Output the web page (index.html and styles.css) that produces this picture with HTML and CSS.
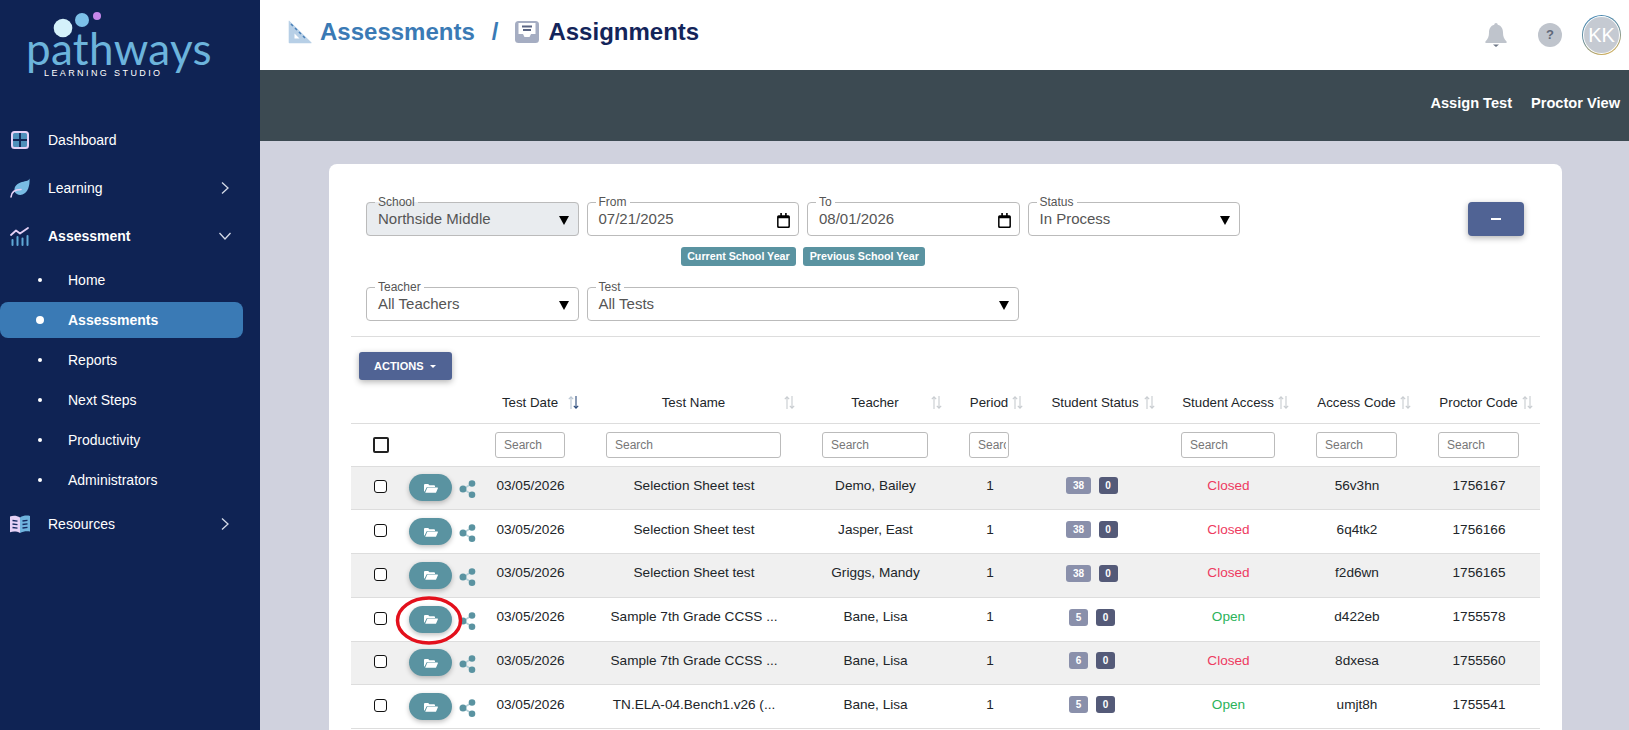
FILE: index.html
```html
<!DOCTYPE html>
<html lang="en">
<head>
<meta charset="utf-8">
<title>Assignments</title>
<link rel="stylesheet" href="styles.css">
</head>
<body>
<svg class="defs" width="0" height="0" aria-hidden="true">
  <symbol id="folder" viewBox="0 0 14 10"><path d="M0 2a1 1 0 0 1 1-1h3.200l1.200 1.200H10a1 1 0 0 1 1 1V4H3.400a1 1 0 0 0-.9.6L.6 8.600H.5a.5.5 0 0 1-.5-.5z"/><path d="M3.400 4.600h10a.5.5 0 0 1 .5.7l-1.700 3.900a1 1 0 0 1-.9.6H1.200z"/></symbol>
  <symbol id="share" viewBox="0 0 18 20"><path d="M14 4.500 5 10l9 5.500" fill="none" stroke="#b5d0d8" stroke-width="1.500"/><circle cx="5" cy="10" r="3.500" fill="#5a93a1"/><circle cx="14" cy="4.500" r="3.300" fill="#5a93a1"/><circle cx="14" cy="15.800" r="3.300" fill="#5a93a1"/></symbol>
  <symbol id="sort" viewBox="0 0 11 13"><path class="s-up" d="M3 13V1M.8 3.200 3 .8l2.200 2.400" fill="none"/><path class="s-down" d="M8 0v12M5.800 9.800 8 12.200l2.200-2.400" fill="none"/></symbol>
  <symbol id="cal" viewBox="0 0 12 14"><path d="M3 0h1.500v2h3V0H9v2h1.500A1.500 1.500 0 0 1 12 3.500v9a1.500 1.500 0 0 1-1.500 1.500h-9A1.500 1.500 0 0 1 0 12.500v-9A1.500 1.500 0 0 1 1.500 2H3zM1.400 5v7.200c0 .2.200.4.400.4h8.400c.2 0 .4-.2.400-.4V5z"/></symbol>
</svg>

<aside class="sidebar">
  <div class="logo">
    <svg class="logo-dots" width="90" height="40" viewBox="0 0 90 40"><circle cx="18" cy="25" r="9.300" fill="#d4f1fa"/><circle cx="37" cy="17" r="7" fill="#7cc0e8"/><circle cx="52" cy="13" r="4" fill="#c687ea"/></svg>
    <div class="logo-name">pathways</div>
    <div class="logo-sub">LEARNING STUDIO</div>
  </div>
  <nav class="nav">
    <a class="nav-item">
      <svg class="nav-icon" viewBox="0 0 20 20"><path d="M3 3h14v14H3z" fill="#4f8fbb"/><path d="M3 10h14M10 3v14" stroke="#0f2354" stroke-width="1.800"/><rect x="2" y="2" width="16" height="16" rx="2.500" fill="none" stroke="#e6d1f6" stroke-width="2"/></svg>
      <span>Dashboard</span>
    </a>
    <a class="nav-item">
      <svg class="nav-icon" viewBox="0 0 20 20"><path d="M19.500 .5c-1 3-5 2.500-9 4C6 6.200 4 9 4.500 13.500c1.500 3 5 4 8 3 5.500-2 7.500-9 7-16z" fill="#79bce4"/><path d="M1 19c.3-4.500 3.500-7.500 10-7.500" fill="none" stroke="#e6d1f6" stroke-width="1.600" stroke-linecap="round"/></svg>
      <span>Learning</span>
      <svg class="chev" viewBox="0 0 10 14"><path d="M2 1.500 8 7l-6 5.500"/></svg>
    </a>
    <a class="nav-item is-open">
      <svg class="nav-icon" viewBox="0 0 20 20"><path d="M1 9l5-4.500 4 3 8-5.500" fill="none" stroke="#e6d1f6" stroke-width="1.800" stroke-linecap="round" stroke-linejoin="round"/><path d="M2.500 14v5M7.500 11v8M12.500 12.500v6.500M17.500 10v9" stroke="#5fa8d6" stroke-width="2" stroke-linecap="round"/></svg>
      <span>Assessment</span>
      <svg class="chev chev-down" viewBox="0 0 14 10"><path d="M1.500 2 7 8l5.500-6"/></svg>
    </a>
    <a class="sub-item"><i class="dot"></i><span>Home</span></a>
    <a class="sub-item is-active"><i class="dot"></i><span>Assessments</span></a>
    <a class="sub-item"><i class="dot"></i><span>Reports</span></a>
    <a class="sub-item"><i class="dot"></i><span>Next Steps</span></a>
    <a class="sub-item"><i class="dot"></i><span>Productivity</span></a>
    <a class="sub-item"><i class="dot"></i><span>Administrators</span></a>
    <a class="nav-item">
      <svg class="nav-icon" viewBox="0 0 20 20"><path d="M0 2.500C3 1.500 7 1.500 10 3.500V19c-3-1.800-7-1.800-10-.8z" fill="#e6d1f6"/><path d="M20 2c-3-.8-7-.5-10 1.500V19c3-1.800 7-2.200 10-1.500z" fill="#6fb3de"/><path d="M2.500 6.500l5 .7M2.500 10l5 .7M2.500 13.500l5 .7M12.500 7l5-.7M12.500 10.500l5-.7M12.500 14l5-.7" stroke="#14295f" stroke-width="1.300"/></svg>
      <span>Resources</span>
      <svg class="chev" viewBox="0 0 10 14"><path d="M2 1.500 8 7l-6 5.500"/></svg>
    </a>
  </nav>
</aside>

<main class="main">
  <header class="topbar">
    <div class="crumbs">
      <svg class="crumb-icon" viewBox="0 0 24 24"><path d="M1 .5 23.500 22.500a.5.5 0 0 1-.4.8H1.500a.8.8 0 0 1-.8-.8V1z" fill="#b7cfe6"/><path d="M6.500 13.500l5 5h-5z" fill="#fff"/><path d="M3 4l2 2M7 8l2 2M11 12l2 2M15 16l2 2" stroke="#4a80b8" stroke-width="1.500"/></svg>
      <span class="crumb-link">Assessments</span>
      <span class="crumb-sep">/</span>
      <svg class="crumb-icon" viewBox="0 0 24 24"><rect y="1" width="24" height="22" rx="3.500" fill="#a5adc2"/><path d="M3.500 3h17v11h-4.500l-1.500 3h-5l-1.500-3H3.500z" fill="#fff"/><path d="M7 6.500h10M8 10h8" stroke="#5a6583" stroke-width="1.800"/></svg>
      <span class="crumb-current">Assignments</span>
    </div>
    <div class="top-tools">
      <svg class="bell" viewBox="0 0 22 24"><path d="M11 0c1 0 1.700.8 1.700 1.800C16.500 2.700 18 6 18 9.500c0 4 1 6.500 3.500 9 .6.700.2 1.500-.7 1.500H1.200c-.9 0-1.300-.8-.7-1.500C3 16 4 13.500 4 9.500 4 6 5.500 2.700 9.300 1.800 9.300.8 10 0 11 0z" fill="#bfc4cc"/><path d="M8 21.500h6L11 24z" fill="#6d7686"/></svg>
      <div class="help">?</div>
      <div class="avatar"><div class="avatar-in">KK</div></div>
    </div>
  </header>
  <div class="actionbar">
    <a>Assign Test</a>
    <a>Proctor View</a>
  </div>

  <div class="content">
    <section class="card">
      <div class="filters-wrap">
        <div class="filters">
          <fieldset class="field is-disabled"><legend>School</legend><span>Northside Middle</span><i class="caret"></i></fieldset>
          <fieldset class="field"><legend>From</legend><span>07/21/2025</span><svg class="cal"><use href="#cal"/></svg></fieldset>
          <fieldset class="field"><legend>To</legend><span>08/01/2026</span><svg class="cal"><use href="#cal"/></svg></fieldset>
          <fieldset class="field"><legend>Status</legend><span>In Process</span><i class="caret"></i></fieldset>
          <div class="chips"><span class="chip">Current School Year</span><span class="chip">Previous School Year</span></div>
          <fieldset class="field row-start"><legend>Teacher</legend><span>All Teachers</span><i class="caret"></i></fieldset>
          <fieldset class="field span-2"><legend>Test</legend><span>All Tests</span><i class="caret"></i></fieldset>
        </div>
        <button class="btn-min"><i></i></button>
      </div>
      <div class="table-wrap">
        <div class="toolbar"><button class="btn-actions">ACTIONS<i></i></button></div>
        <table class="grid">
          <colgroup>
            <col class="w-check"><col class="w-act"><col class="w-date"><col class="w-name"><col class="w-teacher"><col class="w-period"><col class="w-status"><col class="w-access"><col class="w-code"><col class="w-proctor">
          </colgroup>
          <thead>
            <tr class="head">
              <th></th><th></th>
              <th><div class="hd">Test Date<svg class="sort is-sorted"><use href="#sort"/></svg></div></th>
              <th><div class="hd">Test Name<svg class="sort"><use href="#sort"/></svg></div></th>
              <th><div class="hd">Teacher<svg class="sort"><use href="#sort"/></svg></div></th>
              <th class="c-period"><div class="hd">Period<svg class="sort"><use href="#sort"/></svg></div></th>
              <th class="c-status"><div class="hd">Student Status<svg class="sort"><use href="#sort"/></svg></div></th>
              <th><div class="hd">Student Access<svg class="sort"><use href="#sort"/></svg></div></th>
              <th><div class="hd">Access Code<svg class="sort"><use href="#sort"/></svg></div></th>
              <th class="c-proctor"><div class="hd">Proctor Code<svg class="sort"><use href="#sort"/></svg></div></th>
            </tr>
            <tr class="search">
              <th class="c-check"><input class="check-all" type="checkbox"></th><th></th>
              <th><input placeholder="Search"></th>
              <th><input placeholder="Search"></th>
              <th><input placeholder="Search"></th>
              <th class="c-period"><input placeholder="Search"></th>
              <th></th>
              <th><input placeholder="Search"></th>
              <th><input placeholder="Search"></th>
              <th class="c-proctor"><input placeholder="Search"></th>
            </tr>
          </thead>
          <tbody>
            <tr>
              <td class="c-check"><input type="checkbox"></td>
              <td class="c-act"><div class="act"><button class="btn-open"><svg><use href="#folder"/></svg></button><svg class="share"><use href="#share"/></svg></div></td>
              <td>03/05/2026</td><td>Selection Sheet test</td><td>Demo, Bailey</td><td class="c-period">1</td>
              <td class="c-status"><span class="badge b-a">38</span><span class="badge b-b">0</span></td>
              <td class="closed">Closed</td><td>56v3hn</td><td class="c-proctor">1756167</td>
            </tr>
            <tr>
              <td class="c-check"><input type="checkbox"></td>
              <td class="c-act"><div class="act"><button class="btn-open"><svg><use href="#folder"/></svg></button><svg class="share"><use href="#share"/></svg></div></td>
              <td>03/05/2026</td><td>Selection Sheet test</td><td>Jasper, East</td><td class="c-period">1</td>
              <td class="c-status"><span class="badge b-a">38</span><span class="badge b-b">0</span></td>
              <td class="closed">Closed</td><td>6q4tk2</td><td class="c-proctor">1756166</td>
            </tr>
            <tr>
              <td class="c-check"><input type="checkbox"></td>
              <td class="c-act"><div class="act"><button class="btn-open"><svg><use href="#folder"/></svg></button><svg class="share"><use href="#share"/></svg></div></td>
              <td>03/05/2026</td><td>Selection Sheet test</td><td>Griggs, Mandy</td><td class="c-period">1</td>
              <td class="c-status"><span class="badge b-a">38</span><span class="badge b-b">0</span></td>
              <td class="closed">Closed</td><td>f2d6wn</td><td class="c-proctor">1756165</td>
            </tr>
            <tr>
              <td class="c-check"><input type="checkbox"></td>
              <td class="c-act"><div class="act"><button class="btn-open"><svg><use href="#folder"/></svg></button><svg class="share"><use href="#share"/></svg><svg class="ring" viewBox="0 0 68 49"><ellipse cx="34" cy="24.500" rx="31.500" ry="22.500"/></svg></div></td>
              <td>03/05/2026</td><td>Sample 7th Grade CCSS ...</td><td>Bane, Lisa</td><td class="c-period">1</td>
              <td class="c-status"><span class="badge b-a">5</span><span class="badge b-b">0</span></td>
              <td class="open">Open</td><td>d422eb</td><td class="c-proctor">1755578</td>
            </tr>
            <tr>
              <td class="c-check"><input type="checkbox"></td>
              <td class="c-act"><div class="act"><button class="btn-open"><svg><use href="#folder"/></svg></button><svg class="share"><use href="#share"/></svg></div></td>
              <td>03/05/2026</td><td>Sample 7th Grade CCSS ...</td><td>Bane, Lisa</td><td class="c-period">1</td>
              <td class="c-status"><span class="badge b-a">6</span><span class="badge b-b">0</span></td>
              <td class="closed">Closed</td><td>8dxesa</td><td class="c-proctor">1755560</td>
            </tr>
            <tr>
              <td class="c-check"><input type="checkbox"></td>
              <td class="c-act"><div class="act"><button class="btn-open"><svg><use href="#folder"/></svg></button><svg class="share"><use href="#share"/></svg></div></td>
              <td>03/05/2026</td><td>TN.ELA-04.Bench1.v26 (...</td><td>Bane, Lisa</td><td class="c-period">1</td>
              <td class="c-status"><span class="badge b-a">5</span><span class="badge b-b">0</span></td>
              <td class="open">Open</td><td>umjt8h</td><td class="c-proctor">1755541</td>
            </tr>
          </tbody>
        </table>
      </div>
    </section>
  </div>
</main>
</body>
</html>
```
FILE: styles.css
```css
* { box-sizing: border-box; }
html, body { height: 100%; }
body {
  margin: 0;
  display: flex;
  height: 100vh;
  overflow: hidden;
  font-family: "Liberation Sans", Arial, sans-serif;
  font-size: 14px;
  color: #212529;
  background: #d0d2de;
}
.defs { position: absolute; }

/* sidebar */
.sidebar {
  width: 260px;
  flex: none;
  background: #0f2354;
  color: #fff;
}
.logo {
  position: relative;
  height: 116px;
  padding: 30px 0 0 26px;
}
.logo-dots { position: absolute; left: 45px; top: 3px; }
.logo-name {
  font-family: Lato, "Open Sans", sans-serif;
  font-weight: 400;
  font-size: 44px;
  line-height: 36px;
  letter-spacing: 0.3px;
  color: #6cb4dc;
}
.logo-sub {
  position: absolute;
  left: 44px;
  top: 68px;
  font-size: 9px;
  line-height: 10px;
  letter-spacing: 2.400px;
  color: #fff;
}
.nav { display: flex; flex-direction: column; }
.nav-item {
  display: flex;
  align-items: center;
  height: 48px;
  padding-left: 10px;
  color: #fff;
}
.nav-icon { width: 20px; height: 20px; margin-right: 18px; flex: none; }
.is-open { font-weight: 700; }
.chev {
  width: 10px;
  height: 14px;
  margin-left: auto;
  margin-right: 30px;
  fill: none;
  stroke: #d5dbe8;
  stroke-width: 1.300;
}
.chev-down { width: 14px; height: 10px; margin-right: 28px; }
.sub-item {
  display: flex;
  align-items: center;
  height: 36px;
  margin: 2px 17px 2px 0;
  border-radius: 8px;
  color: #fff;
}
.dot {
  width: 4px;
  height: 4px;
  margin: 0 26px 0 38px;
  border-radius: 50%;
  background: #fff;
  flex: none;
}
.is-active { background: #3a7ab5; font-weight: 700; }
.is-active .dot { width: 8px; height: 8px; margin: 0 24px 0 36px; }

/* main */
.main { flex: 1; min-width: 0; display: flex; flex-direction: column; }
.topbar {
  height: 70px;
  flex: none;
  background: #fff;
  display: flex;
  align-items: center;
  justify-content: space-between;
  padding: 0 8px 0 28px;
}
.crumbs { display: flex; align-items: center; font-weight: 700; font-size: 24px; padding-bottom: 6px; }
.crumb-icon { width: 24px; height: 24px; }
.crumb-link { color: #3a7ab5; margin-left: 8px; }
.crumb-sep { color: #3a7ab5; margin: 0 17px 0 17px; }
.crumb-current { color: #13245a; margin-left: 9px; }
.top-tools { display: flex; align-items: center; }
.bell { width: 22px; height: 24px; margin-right: 31px; }
.help {
  width: 24px;
  height: 24px;
  margin-right: 20px;
  border-radius: 50%;
  background: #bfc4cc;
  color: #5f6878;
  font-weight: 700;
  font-size: 13px;
  line-height: 24px;
  text-align: center;
}
.avatar {
  width: 39px;
  height: 40px;
  padding: 1px;
  border-radius: 50%;
  background: linear-gradient(160deg, #3f86b8 0%, #6b8f9a 50%, #e8b64c 100%);
}
.avatar-in {
  width: 100%;
  height: 100%;
  border-radius: 50%;
  border: 1px solid #fff;
  background: #c5cad2;
  color: #fff;
  font-size: 20px;
  line-height: 36px;
  text-align: center;
}
.actionbar {
  height: 71px;
  flex: none;
  background: #3c4a52;
  color: #fff;
  font-weight: 700;
  font-size: 14.600px;
  display: flex;
  justify-content: flex-end;
  gap: 19px;
  padding: 25px 9px 0 0;
  line-height: 16px;
}
.content { flex: 1; min-height: 0; padding: 23px 67px 0 69px; overflow: hidden; }
.card {
  background: #fff;
  border-radius: 8px;
  height: 700px;
}

/* filters */
.filters-wrap {
  display: flex;
  justify-content: space-between;
  align-items: flex-start;
  padding: 31px 38px 0 37px;
}
.filters {
  display: grid;
  grid-template-columns: repeat(4, 212.500px);
  column-gap: 8px;
}
.field {
  display: flex;
  align-items: center;
  justify-content: space-between;
  margin: 0;
  height: 41px;
  min-width: 0;
  padding: 0 8px 0 11px;
  border: 1px solid #bbb;
  border-radius: 4px;
  font-size: 15px;
  color: #555;
}
.field legend {
  padding: 0 3px;
  margin-left: -3px;
  font-size: 12px;
  line-height: 14px;
  color: #555;
}
.field span { position: relative; top: -4px; }
.is-disabled { background: #e9ecef; }
.row-start { grid-column-start: 1; }
.span-2 { grid-column: span 2; margin-right: 1px; }
.caret {
  width: 0;
  height: 0;
  position: relative;
  top: -2px;
  left: -1px;
  border-style: solid;
  border-width: 9px 5px 0;
  border-color: #000 transparent transparent;
}
.cal { width: 13px; height: 15px; fill: #000; position: relative; top: -2px; }
.chips {
  grid-column: 2 / 4;
  display: flex;
  justify-content: center;
  gap: 7px;
  margin: 11px 0 13px;
  height: 20px;
}
.chip {
  height: 19px;
  padding: 0 6.500px;
  border-radius: 3px;
  background: #5a93a1;
  color: #fff;
  font-size: 10.700px;
  font-weight: 700;
  line-height: 19px;
}
.btn-min {
  width: 56px;
  height: 34px;
  margin-top: 7px;
  border: 0;
  border-radius: 4px;
  background: #506394;
  box-shadow: 0 2px 6px rgba(0, 0, 0, .3);
  display: flex;
  align-items: center;
  justify-content: center;
}
.btn-min i { width: 10px; height: 2px; background: #fff; }

/* table */
.table-wrap { margin: 15px 22px 0; border-top: 1px solid #ddd; }
.toolbar { padding: 15px 0 0 8px; height: 43px; }
.btn-actions {
  display: flex;
  align-items: center;
  height: 28px;
  width: 93px;
  padding: 0 0 0 15px;
  border: 0;
  border-radius: 3px;
  background: #506394;
  color: #fff;
  font-family: inherit;
  font-size: 11px;
  font-weight: 700;
  box-shadow: 0 2px 6px rgba(0, 0, 0, .3);
}
.btn-actions i {
  margin-left: 6px;
  border-style: solid;
  border-width: 3px 3px 0;
  border-color: #fff transparent transparent;
}
.grid { width: 1189px; table-layout: fixed; border-collapse: collapse; font-size: 13.600px; }
.w-check { width: 44px; } .w-act { width: 92px; } .w-date { width: 111px; } .w-name { width: 216px; }
.w-teacher { width: 147px; } .w-period { width: 80px; } .w-status { width: 132px; }
.w-access { width: 135px; } .w-code { width: 122px; } .w-proctor { width: 110px; }
.grid th { padding: 0 33px 0 8px; font-weight: 400; }
.grid .head th { height: 43px; padding-top: 2px; border-bottom: 1px solid #ddd; font-size: 13.300px; }
.grid .search th { height: 43px; padding-top: 1px; border-bottom: 1px solid #ddd; }
.grid th.c-period { padding-right: 32px; }
.grid th.c-proctor { padding-right: 21px; }
.grid th.c-status { padding-right: 32px; }
.grid .search .c-check { padding: 0 0 0 22px; text-align: left; }
.hd { position: relative; text-align: center; white-space: nowrap; }
.sort {
  position: absolute;
  left: calc(100% + 3px);
  top: 1px;
  width: 11px;
  height: 13px;
  color: #c8ccd0;
  stroke-width: 1.100px;
}
.s-up { stroke: currentColor; }
.s-down { stroke: var(--down, currentColor); }
.is-sorted { --down: #2a4a7a; color: #b9c6d3; }
.grid .search input {
  display: block;
  width: 100%;
  height: 26px;
  padding: 0 8px;
  border: 1px solid #bbb;
  border-radius: 3px;
  font-family: inherit;
  font-size: 12px;
  background: #fff;
}
.grid .search .c-period input { padding-right: 2px; }
.grid input::placeholder { color: #777; opacity: 1; }
.grid .search .check-all {
  appearance: none;
  width: 16px;
  height: 16px;
  margin: 0;
  padding: 0;
  border: 2px solid #222;
  border-radius: 2px;
  background: #fff;
}
.grid tbody tr { height: 43.750px; }
.grid tbody tr:nth-child(odd) { background: #f0f0f0; }
.grid td {
  padding: 0 32px 5px 8px;
  border-bottom: 1px solid #ddd;
  text-align: center;
  white-space: nowrap;
}
.grid td.c-check { padding: 0 0 2px 23px; text-align: left; }
.grid td.c-check input {
  appearance: none;
  display: block;
  margin: 0;
  width: 13px;
  height: 13px;
  border: 1.300px solid #111;
  border-radius: 3px;
  background: #fff;
}
.grid td.c-act { padding: 0 0 0 14px; }
.grid td.c-proctor { padding-right: 20px; }
.grid td.c-period { padding-right: 30px; }
.grid td.c-status { padding-right: 38px; padding-bottom: 4px; }
.act { position: relative; display: flex; align-items: center; }
.btn-open {
  width: 43px;
  height: 27px;
  padding: 0;
  border: 0;
  border-radius: 14px;
  background: #5a93a1;
  box-shadow: 0 2px 5px rgba(0, 0, 0, .25);
  display: flex;
  align-items: center;
  justify-content: center;
  fill: #fff;
}
.btn-open svg { width: 14px; height: 10px; }
.share { width: 18px; height: 20px; margin: 3px 0 0 6px; }
.ring {
  position: absolute;
  left: -14px;
  top: -10px;
  width: 68px;
  height: 49px;
  fill: none;
  stroke: #e3101c;
  stroke-width: 3.500;
}
.badge {
  display: inline-block;
  height: 17px;
  min-width: 19px;
  padding: 0 6.500px;
  margin-right: 8px;
  border-radius: 3px;
  color: #fff;
  font-size: 10px;
  font-weight: 700;
  line-height: 17px;
  vertical-align: middle;
}
.badge:last-child { margin-right: 0; }
.b-a { background: #8a90ab; }
.b-b { background: #545a78; }
.closed { color: #ee3a60; }
.open { color: #2bb35a; }
```
